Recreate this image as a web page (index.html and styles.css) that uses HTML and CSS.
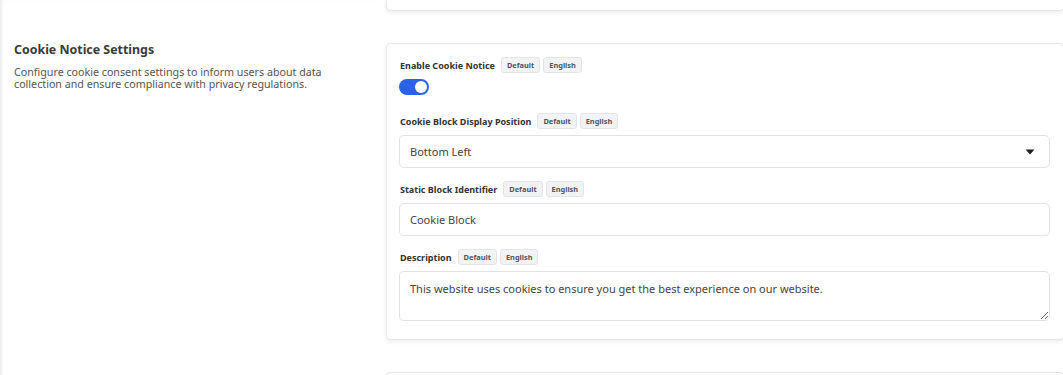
FILE: index.html
```html
<!DOCTYPE html>
<html>
<head>
    <meta charset="UTF-8">
    <link rel="stylesheet" href="styles.css">
</head>

<body>
    <div class="page">
        <div class="section">
            <div class="intro"></div>
            <div class="card card-tail"></div>
        </div>

        <div class="section">
            <div class="intro">
                <h2>Cookie Notice Settings</h2>
                <p>Configure cookie consent settings to inform users about data collection and ensure compliance with privacy regulations.</p>
            </div>

            <div class="card">
                <div class="field field-toggle">
                    <div class="label">
                        <span>Enable Cookie Notice</span>
                        <span class="badge">Default</span>
                        <span class="badge">English</span>
                    </div>
                    <label class="switch">
                        <input type="checkbox" checked />
                        <span class="slider"></span>
                    </label>
                </div>

                <div class="field">
                    <div class="label">
                        <span>Cookie Block Display Position</span>
                        <span class="badge">Default</span>
                        <span class="badge">English</span>
                    </div>
                    <div class="select">
                        <span>Bottom Left</span>
                        <svg width="10" height="6" viewBox="0 0 10 6"><path d="M0.5 0.5h9L5 5.5z" fill="#222"/></svg>
                    </div>
                </div>

                <div class="field">
                    <div class="label">
                        <span>Static Block Identifier</span>
                        <span class="badge">Default</span>
                        <span class="badge">English</span>
                    </div>
                    <input type="text" class="input" value="Cookie Block" />
                </div>

                <div class="field">
                    <div class="label">
                        <span>Description</span>
                        <span class="badge">Default</span>
                        <span class="badge">English</span>
                    </div>
                    <textarea class="input textarea">This website uses cookies to ensure you get the best experience on our website.</textarea>
                </div>
            </div>
        </div>

        <div class="section">
            <div class="intro"></div>
            <div class="card card-head"></div>
        </div>
    </div>
</body>
</html>
```

FILE: styles.css
```css
body {
    margin: 0;
    overflow: hidden;
    background: #fff;
    font-family: "Noto Sans", "Open Sans", sans-serif;
    color: #333;
}

.page {
    width: 1050px;
    padding-left: 14px;
    box-shadow: inset 3px 0 3px -1px rgba(0, 0, 0, 0.07);
    min-height: 375px;
}

.section {
    display: grid;
    grid-template-columns: 372px 678px;
    margin-bottom: 32px;
}

.intro {
    padding-top: 1px;
}

.intro h2 {
    margin: 0 0 10px;
    font-size: 12.4px;
    line-height: 12px;
    font-weight: 700;
    color: #3a3a3a;
}

.intro p {
    margin: 0;
    width: 325px;
    font-size: 10.7px;
    line-height: 12px;
    color: #555;
}

.card {
    box-sizing: border-box;
    border: 1px solid #e6e6e6;
    border-radius: 4px;
    background: #fff;
    padding: 13px 13px 18px 12px;
    box-shadow: 0 2px 4px rgba(0, 0, 0, 0.07);
}

.card-tail {
    height: 11px;
    padding: 0;
    border-top: none;
    border-radius: 0 0 4px 4px;
}

.card-head {
    height: 10px;
    padding: 0;
    border-bottom: none;
    border-radius: 4px 4px 0 0;
    box-shadow: none;
}

.field {
    margin-bottom: 13px;
}

.field:last-child {
    margin-bottom: 0;
}

.field-toggle {
    margin-bottom: 18px;
}

.label {
    display: flex;
    align-items: center;
    height: 16px;
    margin-bottom: 6px;
    padding-left: 1px;
    font-size: 9px;
    font-weight: 700;
    color: #333;
}

.label span:first-child {
    margin-right: 6px;
}

.badge {
    box-sizing: border-box;
    height: 16px;
    line-height: 14px;
    padding: 0 5px;
    margin-right: 3px;
    border: 1px solid #e4e4e6;
    border-radius: 3px;
    background: #f2f3f5;
    font-size: 7.4px;
    font-weight: 700;
    color: #505560;
}

.switch {
    display: block;
    position: relative;
    width: 30px;
    height: 16px;
}

.switch input {
    display: none;
}

.slider {
    position: absolute;
    inset: 0;
    border-radius: 8px;
    background: #2c62e6;
}

.slider::after {
    content: "";
    position: absolute;
    top: 2px;
    right: 2px;
    width: 12px;
    height: 12px;
    border-radius: 50%;
    background: #fff;
}

.select,
.input {
    box-sizing: border-box;
    width: 651px;
    height: 33px;
    border: 1px solid #e3e3e5;
    border-radius: 5px;
    background: #fff;
    padding: 0 10px;
    font-family: inherit;
    font-size: 11px;
    color: #444;
    outline: none;
}

.select {
    display: flex;
    align-items: center;
    justify-content: space-between;
    padding-right: 14px;
}

.textarea {
    display: block;
    height: 50px;
    padding: 9px 10px;
    line-height: 16px;
    resize: vertical;
}
```
